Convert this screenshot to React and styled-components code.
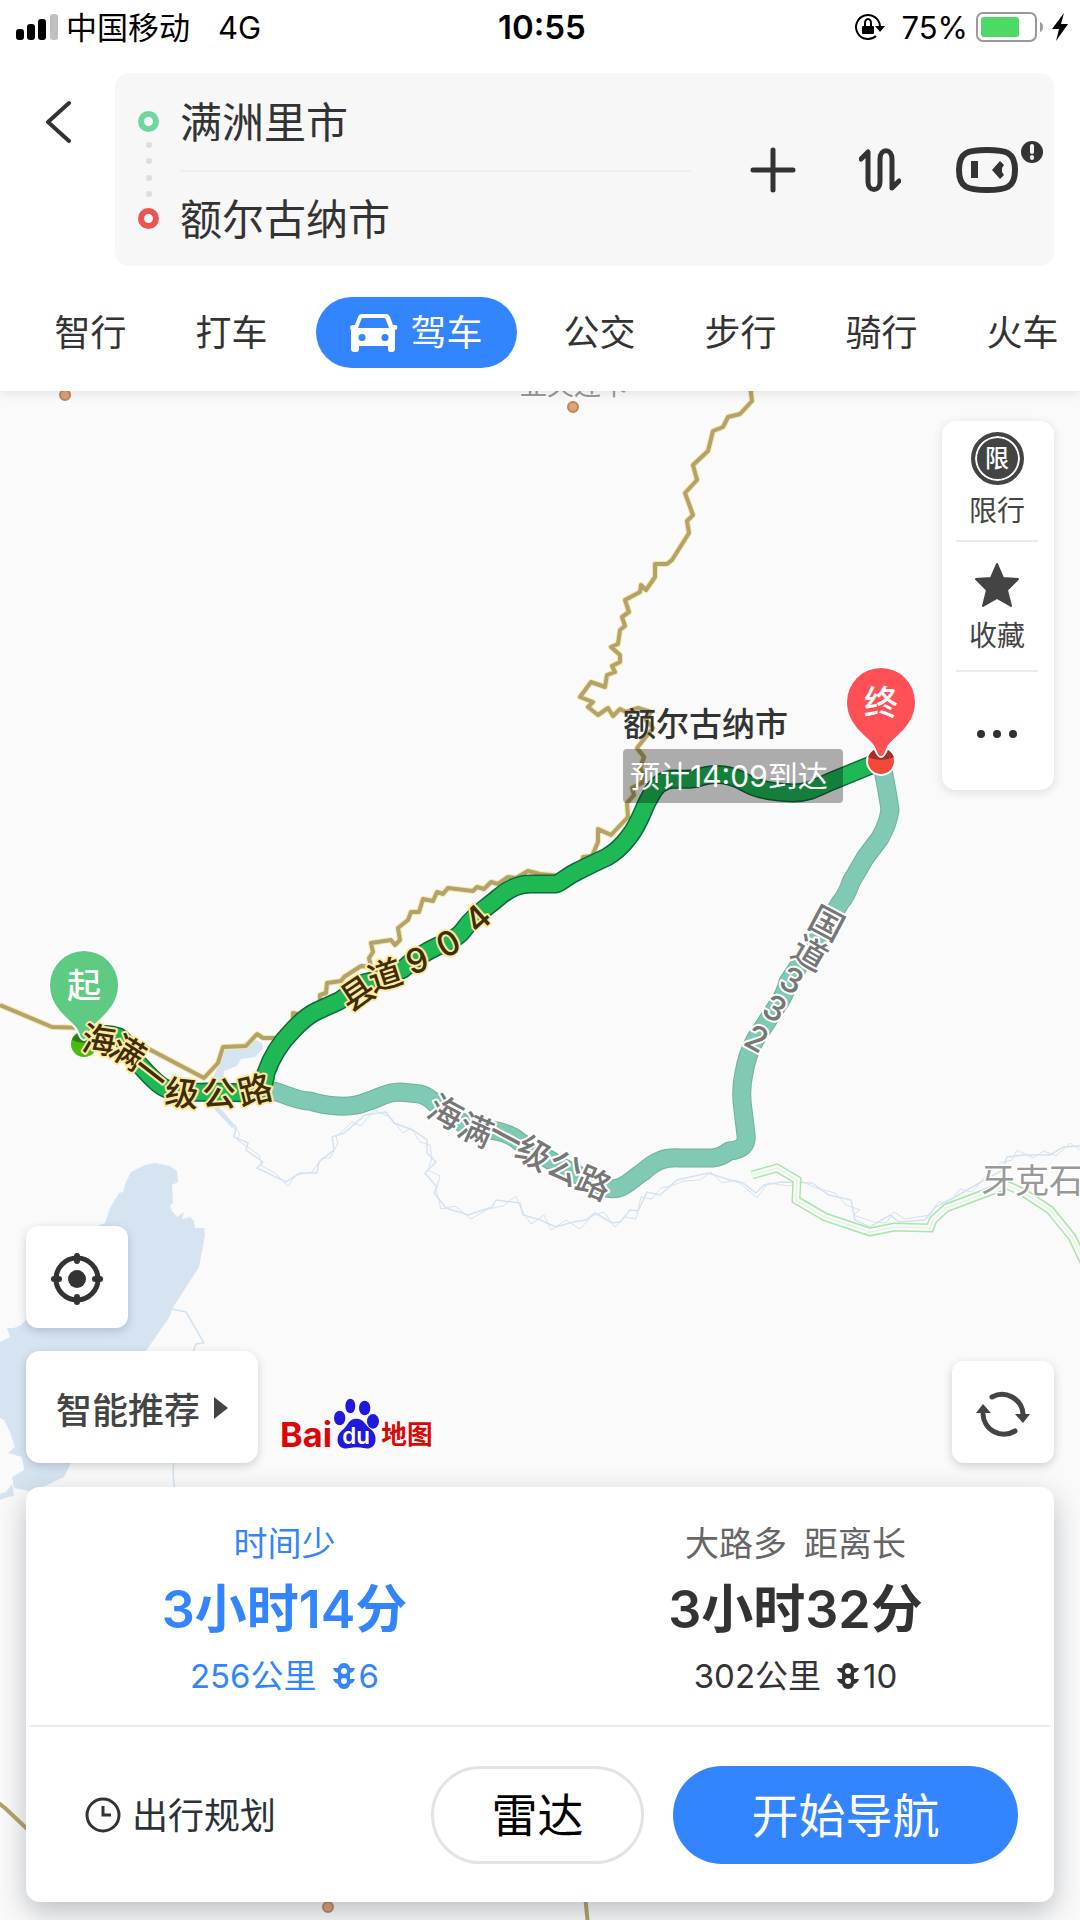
import React, { useState } from "react";
import styled, { createGlobalStyle } from "styled-components";

const tabs = ["智行", "打车", "驾车", "公交", "步行", "骑行", "火车"];

const routes = [
    { tag: "时间少", time: "3小时14分", distance: "256公里", lights: 6 },
    { tag: "大路多\u2002距离长", time: "3小时32分", distance: "302公里", lights: 10 },
];

const BORDER =
    "M750,385 L752,401 740,414 728,417 723,427 713,431 708,451 693,465 697,480 685,493 693,515 687,521 689,533 672,560 667,564 655,564 655,577 646,590 641,585 640,592 625,600 629,612 622,617 625,626 620,630 618,644 611,647 620,655 620,662 612,666 615,672 607,675 605,687 591,682 580,697 593,702 588,707 598,715 608,708 613,716 620,709 626,712 638,708 651,712 646,720 653,728 645,738 637,748 644,757 640,768 644,775 642,783 632,788 634,795 627,803 628,817 611,835 598,829 598,842 592,856 583,857 581,864 560,876 540,874 528,871 516,878 508,877 498,884 491,882 484,889 477,887 473,891 448,888 443,894 437,892 433,901 423,899 419,912 411,912 408,920 398,928 400,940 395,945 391,940 371,943 373,952 369,958 371,967 361,966 344,977 341,981 327,983 326,993 320,995 320,1004 311,1007 303,1015 293,1013 293,1022 288,1027 277,1038 263,1038 257,1034 246,1046 223,1047 218,1063 204,1078 145,1047 114,1030 86,1028 52,1027 0,1005";

const MAIN_ROUTE =
    "M84,1043 Q100,1030 119,1037 C128,1042 129,1053 138,1063 S158,1086 167,1089 Q180,1093 207,1092 L256,1093 Q264,1090 266,1073 C272,1055 281,1042 293,1030 Q306,1016 317,1011 L339,1001 C350,995 355,984 368,982 C388,979 390,975 403,969 C414,959 425,952 438,946 Q458,939 465,928 C475,914 485,909 499,897 Q515,883 533,884 H556 C562,882 567,876 578,871 Q592,864 607,857 Q619,850 628,838 C640,824 643,808 650,797 Q658,779 675,779 Q690,780 697,778 Q712,773 724,775 C735,776 742,781 750,785 S770,792 793,793 C810,793 820,786 832,781 L881,761";

const OTHER_ROUTE =
    "M258,1089 L277,1092 C290,1096 298,1101 310,1101 C325,1106 350,1109 366,1102 C380,1098 385,1092 400,1092 L420,1094 Q428,1096 436,1104 L465,1125 C485,1131 504,1128 520,1142 L560,1166 586,1179 607,1188 C622,1192 630,1180 643,1172 C655,1161 664,1157 680,1158 H712 Q722,1157 729,1151 C742,1150 747,1145 746,1135 L743,1110 Q740,1090 744,1073 Q747,1055 755,1040 L777,1006 Q785,995 788,982 L804,958 827,924 840,903 Q847,895 851,882 L865,858 880,838 Q888,824 890,810 Q888,795 882,765";

const RIVERS = [
    "M215,1107 L236,1127 234,1137 248,1143 246,1150 263,1162 257,1168 286,1182 300,1173 317,1173 319,1162 334,1150 332,1137 344,1133 365,1115 386,1112 394,1123 413,1130 427,1140 427,1153 436,1162 425,1173 437,1187 434,1193 446,1208 468,1215 492,1207 496,1200 520,1203 523,1215 540,1220 556,1227 573,1222 586,1220 595,1213 612,1223 620,1222 630,1210 638,1211 647,1192 660,1195 677,1180 708,1173 730,1180 743,1183 756,1193 764,1185 782,1182 812,1183 829,1195 851,1200 855,1220 870,1227 890,1215 899,1222 925,1220 935,1207 955,1197 981,1182 1003,1170 1007,1157 1024,1155 1050,1155 1063,1147 1080,1146",
    "M222,1110 L240,1134 237,1140 252,1150 259,1155 262,1166 275,1173 288,1186 296,1175 312,1172 322,1158 330,1158 338,1143 336,1137 352,1122 361,1126 374,1110 390,1117 403,1133 411,1128 420,1142 430,1145 432,1158 428,1170 440,1176 436,1190 441,1209 455,1206 471,1219 488,1209 503,1206 516,1196 522,1211 531,1224 544,1215 551,1230 566,1220 580,1229 592,1216 604,1212 615,1227 625,1217 636,1219 641,1197 652,1199 661,1188 671,1186 684,1181 700,1180 711,1172 722,1183 736,1180 748,1190 757,1198 768,1183 790,1186 801,1181 816,1188 835,1193 846,1205 860,1210 853,1215 874,1222 886,1223 894,1212 905,1219 918,1217 930,1215 938,1202 949,1203 960,1189 972,1192 985,1177 1000,1163 1012,1160 1017,1150 1033,1158 1044,1151 1056,1156 1070,1143 1080,1150",
    "M172,1309 L186,1312 204,1343 196,1344 193,1352 M174,1460 Q172,1475 175,1490",
];

const LAKE =
    "M105,1223 L110,1208 119,1193 123,1192 126,1182 131,1172 145,1165 155,1163 170,1166 177,1171 178,1182 172,1185 173,1203 170,1205 172,1211 177,1217 184,1212 182,1219 190,1217 194,1221 195,1228 204,1228 205,1235 199,1267 172,1309 170,1316 146,1351 100,1420 71,1463 64,1477 45,1486 29,1491 14,1488 12,1477 24,1470 22,1457 8,1453 15,1447 10,1432 4,1420 0,1418 V1342 L10,1337 7,1328 14,1328 21,1325 26,1320 100,1225 Z";

const POND =
    "M224,1050 L245,1042 254,1039 262,1043 263,1048 255,1057 241,1059 237,1066 224,1071 222,1090 217,1105 235,1126 232,1128 215,1110 207,1092 214,1075 220,1062 Z";

const HIGHWAY =
    "M752,1175 L777,1168 797,1180 796,1200 825,1217 870,1232 894,1227 930,1228 933,1220 946,1208 1007,1185 1024,1193 1050,1210 1072,1237 1084,1262";

// [char, x, y, rotation]
const mainLabels = [
    ["海", 99, 1040, 8],
    ["满", 128, 1052, 32],
    ["一", 151, 1073, 38],
    ["级", 182, 1093, 6],
    ["公", 219, 1093, 0],
    ["路", 255, 1090, -14],
    ["县", 357, 993, -34],
    ["道", 385, 975, -18],
    ["9", 417, 960, -20],
    ["0", 448, 943, -28],
    ["4", 477, 918, -42],
];

const otherLabels = [
    ["海", 446, 1112, 28],
    ["满", 476, 1130, 24],
    ["一", 506, 1137, 28],
    ["级", 534, 1153, 30],
    ["公", 565, 1168, 28],
    ["路", 594, 1183, 24],
    ["国", 827, 923, 28],
    ["道", 810, 953, 30],
    ["3", 792, 980, 28],
    ["3", 775, 1008, 28],
    ["2", 757, 1038, 28],
];

const PIN = "M0,54 C-3,54 -4,49 -6,45 C-11,35 -34,25 -34,0 A34,34 0 1 1 34,0 C34,25 11,35 6,45 C4,49 3,54 0,54 Z";

const MapPin = ({ x, y, color, text }) => (
    <g transform={`translate(${x} ${y})`}>
        <path d={PIN} fill={color} stroke="#fff" strokeWidth="4" paintOrder="stroke" />
        <PinText dy="0.37em">{text}</PinText>
    </g>
);

const RoadLabels = ({ items, fill, halo }) =>
    items.map(([char, x, y, angle], i) => (
        <RoadText key={i} $fill={fill} $halo={halo} dy="0.37em" transform={`translate(${x} ${y}) rotate(${angle})`}>
            {char}
        </RoadText>
    ));

const RouteMap = () => (
    <MapCanvas viewBox="0 391 1080 1529" preserveAspectRatio="xMidYMid slice" aria-label="路线地图">
        <path d={LAKE} fill="#d5e4f0" />
        <path d={POND} fill="#d5e4f0" />
        <g fill="none" stroke="#d3e2f0">
            <path d={RIVERS[0]} strokeWidth="1.5" />
            <path d={RIVERS[1]} strokeWidth="1" />
            <path d={RIVERS[2]} strokeWidth="1.5" />
        </g>
        <path d="M0,1494 L6,1492 12,1484 14,1496 8,1497 0,1500 Z" fill="#d5e4f0" />
        <path d={HIGHWAY} fill="none" stroke="#a3e8a6" strokeWidth="9" />
        <path d={HIGHWAY} fill="none" stroke="#fafafa" strokeWidth="6" />
        <path d={HIGHWAY} fill="none" stroke="#d9f5da" strokeWidth="1" />
        <g fill="none" strokeLinejoin="round">
            <path d={BORDER} stroke="#f4e7ae" strokeWidth="6" />
            <path d={BORDER} stroke="#b3a369" strokeWidth="4" />
            <path d="M-4,1801 L5,1808 60,1860 M585,1895 L588,1925" stroke="#b3a369" strokeWidth="4" />
        </g>
        <g fill="#dda17c" stroke="#c28458" strokeWidth="2">
            <circle cx="65" cy="395" r="5" />
            <circle cx="573" cy="407" r="5" />
            <circle cx="328" cy="1907" r="5" />
        </g>
        <PlaceText x="520" y="395" $size={27}>亚夫连卡</PlaceText>
        <PlaceText x="981" y="1193" $size={34}>牙克石</PlaceText>
        <g fill="none" strokeLinejoin="round">
            <path d={OTHER_ROUTE} stroke="#6fb09c" strokeWidth="19" />
            <path d={OTHER_ROUTE} stroke="#80c9b5" strokeWidth="17" />
            <path d={MAIN_ROUTE} stroke="#0d6b38" strokeWidth="19" />
            <path d={MAIN_ROUTE} stroke="#1eb954" strokeWidth="16" />
        </g>
        <circle cx="84" cy="1044" r="13" fill="#49bb0c" />
        <path d="M72,1040 A13,13 0 0 1 96,1040 Q84,1046 72,1040" fill="#2d7d17" />
        <circle cx="881" cy="761" r="14" fill="#f24a3a" stroke="#fff" strokeWidth="2" />
        <path d="M868,757 A14,14 0 0 1 894,757 Q881,763 868,757" fill="#a52c27" />
        <MapPin x={84} y={985} color="#5fca82" text="起" />
        <RoadLabels items={mainLabels} fill="#412d05" halo="#fdeaa2" />
        <RoadLabels items={otherLabels} fill="#777" halo="#fff" />
        <CityText x="623" y="736">额尔古纳市</CityText>
        <rect x="623" y="749" width="220" height="54" rx="4" fill="#000" fillOpacity="0.31" />
        <ArrivalText x="630" y="787">预计14:09到达</ArrivalText>
        <MapPin x={881} y={702} color="#ff5056" text="终" />
    </MapCanvas>
);

const TrafficLight = () => (
    <svg width="22" height="26" viewBox="0 0 22 26" fill="currentColor" aria-hidden="true">
        <path
            fillRule="evenodd"
            d="M11,0 C15,0 17,3 17,6 V20 C17,23 15,26 11,26 C7,26 5,23 5,20 V6 C5,3 7,0 11,0 Z M11,5 A3,3 0 1 0 11,11 A3,3 0 1 0 11,5 Z M11,15 A3,3 0 1 0 11,21 A3,3 0 1 0 11,15 Z"
        />
        <path d="M0,5 H5 V10 Q1,9 0,5 Z M0,16 H5 V21 Q1,20 0,16 Z" />
        <path d="M22,5 H17 V10 Q21,9 22,5 Z M22,16 H17 V21 Q21,20 22,16 Z" />
    </svg>
);

const BaiduLogo = () => (
    <Logo viewBox="26 26 468 156" role="img" aria-label="Baidu 地图">
        <text x="29" y="172" fill="#dc0606" fontSize="103" fontWeight="700">Bai</text>
        <g fill="#2019dc">
            <ellipse cx="208" cy="86" rx="17" ry="22" />
            <ellipse cx="240" cy="50" rx="15" ry="22" />
            <ellipse cx="283" cy="56" rx="17" ry="22" />
            <ellipse cx="308" cy="96" rx="18" ry="22" />
            <path d="M258,88 C280,88 284,106 298,117 C312,128 318,140 315,157 C311,174 297,180 280,176 Q258,172 238,176 C218,181 205,173 202,157 C200,140 207,130 219,120 C232,108 236,88 258,88 Z" />
        </g>
        <text x="216" y="164" fill="#fff" fontSize="67" fontWeight="600">du</text>
        <text x="333" y="165" fill="#dc0606" fontSize="77" fontWeight="700">地图</text>
    </Logo>
);

export default function App() {
    const [mode, setMode] = useState("驾车");
    const [selected, setSelected] = useState(0);

    return (
        <Page>
            <GlobalStyle />
            <Header>
                <StatusBar>
                    <StatusGroup>
                        <svg width="42" height="26" viewBox="0 0 42 26" aria-hidden="true">
                            <rect x="0" y="15" width="8" height="11" rx="3" />
                            <rect x="11" y="10" width="8" height="16" rx="3" />
                            <rect x="22" y="5" width="8" height="21" rx="3" />
                            <rect x="34" y="0" width="8" height="26" rx="3" fill="#bfbfbf" />
                        </svg>
                        <Carrier>中国移动</Carrier>
                        <span>4G</span>
                    </StatusGroup>
                    <Clock>10:55</Clock>
                    <StatusGroup $end>
                        <svg width="31" height="28" viewBox="0 0 31 28" fill="none" stroke="#000" strokeWidth="2" aria-hidden="true">
                            <path d="M22,23 A12,12 0 1 1 26,13" />
                            <path d="M21,13 H31 L26,19 Z" fill="#000" stroke="none" />
                            <path d="M11,14 V10 A3,4 0 0 1 17,10 V14" />
                            <rect x="8" y="13" width="12" height="8" rx="1" fill="#000" stroke="none" />
                        </svg>
                        <Percent>75%</Percent>
                        <svg width="68" height="30" viewBox="0 0 68 30" aria-hidden="true">
                            <rect x="1" y="1" width="59" height="28" rx="6" fill="#fff" stroke="#999" strokeWidth="2" />
                            <rect x="5" y="5" width="38" height="20" rx="3" fill="#4cd964" />
                            <path d="M64,10 Q67,11 67,15 T64,20 Z" fill="#999" />
                        </svg>
                        <svg width="16" height="28" viewBox="0 0 16 28" aria-hidden="true">
                            <path d="M12,0 L0,16 H7 L4,28 L16,11 H9 Z" />
                        </svg>
                    </StatusGroup>
                </StatusBar>

                <SearchRow>
                    <BackButton aria-label="返回">
                        <svg width="26" height="44" viewBox="0 0 26 44" fill="none" stroke="#333" strokeWidth="4" strokeLinecap="round" strokeLinejoin="round">
                            <path d="M24,3 L3,22 L24,41" />
                        </svg>
                    </BackButton>
                    <SearchBox>
                        <Stops>
                            <Ring $color="#6ed7a0" />
                            <Dots><i /><i /><i /><i /></Dots>
                            <Ring $color="#ee5253" />
                        </Stops>
                        <Places>
                            <PlaceInput aria-label="起点" defaultValue="满洲里市" />
                            <PlaceInput aria-label="终点" defaultValue="额尔古纳市" />
                        </Places>
                        <IconButton aria-label="添加途经点">
                            <svg width="46" height="46" viewBox="0 0 46 46" stroke="#333" strokeWidth="5" strokeLinecap="round">
                                <path d="M23,3 V43 M3,23 H43" />
                            </svg>
                        </IconButton>
                        <IconButton aria-label="交换起终点">
                            <svg width="42" height="44" viewBox="0 0 42 44" fill="none" stroke="#333" strokeWidth="5" strokeLinecap="round" strokeLinejoin="round">
                                <path d="M2,11 L9,4 V34 C9,44 21,44 21,34 V11 C21,0 33,0 33,11 V40 L40,33" />
                            </svg>
                        </IconButton>
                        <IconButton aria-label="智能助手">
                            <svg width="62" height="46" viewBox="0 0 62 46" overflow="visible">
                                <path d="M31,3 C50,3 59,5 59,23 C59,41 50,43 31,43 C12,43 3,41 3,23 C3,5 12,3 31,3 Z" fill="none" stroke="#333" strokeWidth="6" />
                                <path d="M15,14 H22 V31 H15 Z M36,23 L44,14 L48,18 L46,21 V25 L48,28 L44,32 Z" fill="#333" />
                                <circle cx="76" cy="5" r="11" fill="#333" />
                                <path d="M76,-1 V5 M76,10 V11" stroke="#f7f7f7" strokeWidth="4" strokeLinecap="round" />
                            </svg>
                        </IconButton>
                    </SearchBox>
                </SearchRow>

                <Tabs>
                    {tabs.map((tab) => (
                        <Tab key={tab} $active={tab === mode} onClick={() => setMode(tab)}>
                            {tab === "驾车" && (
                                <svg width="48" height="38" viewBox="0 0 48 38" fill="currentColor" aria-hidden="true">
                                    <path
                                        fillRule="evenodd"
                                        d="M12,0 H36 Q39,0 40,3 L43,11 H46 Q48,12 47,15 L45,16 V35 Q45,38 42,38 H40 Q38,38 38,35 V32 H9 V35 Q9,38 6,38 H4 Q1,38 1,35 V16 L0,14 Q0,11 3,11 H5 L8,3 Q9,0 12,0 Z M13,4 Q11,4 11,6 L8,14 H39 L36,6 Q36,4 34,4 Z M12,20 A3,3 0 1 0 12,27 A3,3 0 1 0 12,20 Z M35,20 A3,3 0 1 0 35,27 A3,3 0 1 0 35,20 Z"
                                    />
                                </svg>
                            )}
                            <TabLabel>{tab}</TabLabel>
                        </Tab>
                    ))}
                </Tabs>
            </Header>

            <MapArea>
                <RouteMap />
                <Toolbar>
                    <Tool>
                        <LimitBadge>限</LimitBadge>
                        限行
                    </Tool>
                    <Tool>
                        <svg width="46" height="46" viewBox="0 0 46 46" aria-hidden="true">
                            <path d="M23,2 L29,16 L44,17 L33,28 L37,44 L23,36 L9,44 L13,28 L2,17 L17,16 Z" fill="#444" stroke="#444" strokeWidth="2" strokeLinejoin="round" />
                        </svg>
                        收藏
                    </Tool>
                    <Tool aria-label="更多">
                        <svg width="42" height="10" viewBox="0 0 42 10" fill="#2b3138">
                            <circle cx="5" cy="5" r="4" />
                            <circle cx="21" cy="5" r="4" />
                            <circle cx="37" cy="5" r="4" />
                        </svg>
                    </Tool>
                </Toolbar>

                <MapFooter>
                    <LeftControls>
                        <SquareButton aria-label="定位">
                            <svg width="52" height="52" viewBox="0 0 52 52" fill="none" stroke="#333" strokeLinecap="round">
                                <circle cx="26" cy="26" r="21" strokeWidth="5" />
                                <circle cx="26" cy="26" r="9" fill="#333" stroke="none" />
                                <path d="M26,3 V8 M26,44 V49 M3,26 H8 M44,26 H49" strokeWidth="6" />
                            </svg>
                        </SquareButton>
                        <RecommendButton>
                            智能推荐
                            <svg width="14" height="22" viewBox="0 0 14 22" fill="#444" aria-hidden="true">
                                <path d="M0,0 L14,11 L0,22 Z" />
                            </svg>
                        </RecommendButton>
                    </LeftControls>
                    <BaiduLogo />
                    <SquareButton aria-label="刷新">
                        <svg width="54" height="46" viewBox="0 0 54 46" fill="none" stroke="#444" strokeWidth="5" strokeLinecap="round">
                            <path d="M16,6 A21,21 0 0 1 47,23" />
                            <path d="M39,40 A21,21 0 0 1 7,23" />
                            <path d="M39,23 H54 L47,32 Z M0,22 H15 L7,13 Z" fill="#444" stroke="none" />
                        </svg>
                    </SquareButton>
                </MapFooter>

                <Card>
                    <RouteList>
                        {routes.map((route, i) => (
                            <RouteOption key={route.time} $active={i === selected} onClick={() => setSelected(i)}>
                                <RouteTag $active={i === selected}>{route.tag}</RouteTag>
                                <RouteTime>{route.time}</RouteTime>
                                <RouteInfo>
                                    {route.distance}
                                    <Lights>
                                        <TrafficLight />
                                        {route.lights}
                                    </Lights>
                                </RouteInfo>
                            </RouteOption>
                        ))}
                    </RouteList>
                    <Actions>
                        <PlanButton>
                            <svg width="36" height="36" viewBox="0 0 36 36" fill="none" stroke="#333" strokeWidth="3" aria-hidden="true">
                                <circle cx="18" cy="18" r="16" />
                                <path d="M18,9 V18 H26" />
                            </svg>
                            <TabLabel>出行规划</TabLabel>
                        </PlanButton>
                        <RadarButton>雷达</RadarButton>
                        <StartButton>开始导航</StartButton>
                    </Actions>
                </Card>
            </MapArea>
        </Page>
    );
}

const GlobalStyle = createGlobalStyle`
    * {
        box-sizing: border-box;
    }

    body {
        margin: 0;
        font-family: Inter, "Noto Sans CJK SC", sans-serif;
        color: #333;
    }

    button,
    input {
        font: inherit;
        color: inherit;
        border: none;
        background: none;
        padding: 0;
        margin: 0;
    }

    button {
        cursor: pointer;
    }

    svg {
        flex-shrink: 0;
    }
`;

const Page = styled.div`
    min-height: 100vh;
    display: flex;
    flex-direction: column;
    background-color: #fafafa;
`;

const Header = styled.header`
    position: relative;
    z-index: 1;
    background-color: #fff;
    box-shadow: 0 2px 10px rgba(30, 40, 60, 0.12);
`;

const StatusBar = styled.div`
    height: 54px;
    padding: 0 12px 0 16px;
    display: grid;
    grid-template-columns: 1fr auto 1fr;
    align-items: center;
    font-size: 31px;
    color: #000;
`;

const StatusGroup = styled.div`
    display: flex;
    align-items: center;
    justify-content: ${({ $end }) => ($end ? "flex-end" : "flex-start")};
    gap: 8px;
`;

const Carrier = styled.span`
    margin-right: 20px;
    padding-bottom: 4px;
`;

const Clock = styled.div`
    font-size: 33px;
    font-weight: 600;
`;

const Percent = styled.span`
    margin-left: 8px;
`;

const SearchRow = styled.div`
    display: flex;
    align-items: flex-start;
    padding: 19px 26px 0 0;
`;

const BackButton = styled.button`
    width: 115px;
    height: 98px;
    display: flex;
    align-items: center;
    justify-content: center;
`;

const SearchBox = styled.div`
    flex: 1;
    min-width: 0;
    display: flex;
    align-items: center;
    height: 193px;
    padding: 0 14px 0 23px;
    background-color: #f7f7f7;
    border-radius: 14px;
`;

const Stops = styled.div`
    display: flex;
    flex-direction: column;
    align-items: center;
    width: 21px;
    margin-right: 21px;
`;

const Ring = styled.span`
    width: 21px;
    height: 21px;
    border: 6px solid ${({ $color }) => $color};
    border-radius: 50%;
    background-color: #fff;
`;

const Dots = styled.div`
    height: 76px;
    padding: 5px 0;
    display: flex;
    flex-direction: column;
    justify-content: space-around;

    i {
        width: 6px;
        height: 6px;
        border-radius: 50%;
        background-color: #ddd;
    }
`;

const Places = styled.div`
    flex: 1;
    min-width: 0;
    margin-right: 28px;
`;

const PlaceInput = styled.input`
    display: block;
    width: 100%;
    height: 96px;
    padding-bottom: 4px;
    font-size: 42px;
    outline: none;

    & + & {
        border-top: 2px solid #efefef;
    }
`;

const IconButton = styled.button`
    width: 107px;
    height: 96px;
    display: flex;
    align-items: center;
    justify-content: center;
`;

const Tabs = styled.nav`
    display: flex;
    align-items: center;
    height: 125px;
    padding: 8px 0 0 20px;
    overflow: hidden;
`;

const Tab = styled.button`
    flex-shrink: 0;
    display: flex;
    align-items: center;
    justify-content: center;
    gap: 12px;
    width: ${({ $active }) => ($active ? "201px" : "141px")};
    height: 71px;
    margin: ${({ $active }) => ($active ? "0 12px 0 14px" : "0")};
    border-radius: 36px;
    font-size: 36px;
    color: ${({ $active }) => ($active ? "#fff" : "#333")};
    background-color: ${({ $active }) => ($active ? "#3385ff" : "transparent")};
`;

const TabLabel = styled.span`
    padding-bottom: 5px;
`;

const MapArea = styled.main`
    position: relative;
    flex: 1;
    display: flex;
    flex-direction: column;
    padding: 30px 26px 18px;
    overflow: hidden;
`;

const MapCanvas = styled.svg`
    position: absolute;
    inset: 0;
    width: 100%;
    height: 100%;
`;

const PinText = styled.text`
    fill: #fff;
    font-size: 34px;
    font-weight: 500;
    text-anchor: middle;
`;

const RoadText = styled.text`
    fill: ${({ $fill }) => $fill};
    stroke: ${({ $halo }) => $halo};
    stroke-width: 4px;
    stroke-linejoin: round;
    paint-order: stroke;
    font-size: 34px;
    font-weight: 500;
    text-anchor: middle;
`;

const PlaceText = styled.text`
    fill: #999;
    stroke: #fff;
    stroke-width: 3px;
    paint-order: stroke;
    font-size: ${({ $size }) => $size}px;
`;

const CityText = styled.text`
    fill: #333;
    font-size: 33px;
    font-weight: 500;
`;

const ArrivalText = styled.text`
    fill: #fff;
    font-size: 30px;
`;

const Toolbar = styled.div`
    position: relative;
    align-self: flex-end;
    width: 112px;
    display: flex;
    flex-direction: column;
    padding: 0 16px 0 14px;
    background-color: #fff;
    border-radius: 14px;
    box-shadow: 0 2px 10px rgba(30, 40, 60, 0.14);
`;

const Tool = styled.button`
    display: flex;
    flex-direction: column;
    align-items: center;
    justify-content: center;
    gap: 8px;
    height: 130px;
    padding-top: 6px;
    font-size: 28px;
    line-height: 40px;
    white-space: nowrap;
    color: #444;

    &:first-child {
        height: 119px;
        padding-top: 2px;
        gap: 6px;
    }

    & + & {
        border-top: 2px solid #ebebeb;
    }

    &:last-child {
        height: 120px;
    }
`;

const LimitBadge = styled.span`
    width: 53px;
    height: 53px;
    display: flex;
    align-items: center;
    justify-content: center;
    border: 4px solid #444;
    border-radius: 50%;
    box-shadow: inset 0 0 0 2px #fff;
    background-color: #444;
    color: #fff;
    font-size: 24px;
    line-height: 24px;
    font-weight: 500;
`;

const MapFooter = styled.div`
    position: relative;
    display: flex;
    align-items: flex-end;
    margin-top: auto;
    margin-bottom: 24px;
`;

const LeftControls = styled.div`
    display: flex;
    flex-direction: column;
    gap: 23px;
`;

const SquareButton = styled.button`
    width: 102px;
    height: 102px;
    padding-top: 4px;
    display: flex;
    align-items: center;
    justify-content: center;
    background-color: #fff;
    border-radius: 12px;
    box-shadow: 0 3px 10px rgba(30, 40, 60, 0.2);
`;

const RecommendButton = styled.button`
    width: 232px;
    height: 112px;
    padding-top: 2px;
    display: flex;
    align-items: center;
    justify-content: center;
    gap: 14px;
    background-color: #fff;
    border-radius: 14px;
    box-shadow: 0 3px 10px rgba(30, 40, 60, 0.2);
    font-size: 36px;
    font-weight: 500;
    color: #444;
`;

const Logo = styled.svg`
    width: 156px;
    height: 52px;
    margin: 0 auto 13px 21px;
    overflow: visible;
`;

const Card = styled.section`
    position: relative;
    background-color: #fff;
    border-radius: 14px;
    box-shadow: 0 10px 28px rgba(30, 40, 60, 0.28);
`;

const RouteList = styled.div`
    display: grid;
    grid-template-columns: 1fr 1fr;
    margin: 0 3px;
    padding: 24px 0 16px;
    border-bottom: 2px solid #ebebeb;
`;

const RouteOption = styled.button`
    display: flex;
    flex-direction: column;
    align-items: center;
    line-height: 66px;
    color: ${({ $active }) => ($active ? "#3385ff" : "#333")};
`;

const RouteTag = styled.span`
    font-size: 34px;
    color: ${({ $active }) => ($active ? "#3385ff" : "#666")};
`;

const RouteTime = styled.strong`
    font-size: 52px;
    font-weight: 600;
`;

const RouteInfo = styled.span`
    display: flex;
    align-items: center;
    gap: 16px;
    font-size: 33px;
`;

const Lights = styled.span`
    display: flex;
    align-items: center;
    gap: 4px;
`;

const Actions = styled.div`
    display: flex;
    align-items: center;
    gap: 29px;
    padding: 39px 36px 38px 59px;
`;

const PlanButton = styled.button`
    display: flex;
    align-items: center;
    gap: 11px;
    margin-right: auto;
    font-size: 36px;
    color: #2b3138;
`;

const RadarButton = styled.button`
    width: 213px;
    height: 98px;
    padding-bottom: 6px;
    border: 3px solid #e3e3e3;
    border-radius: 49px;
    font-size: 46px;
    color: #000;
`;

const StartButton = styled.button`
    width: 345px;
    height: 98px;
    padding-bottom: 6px;
    border-radius: 49px;
    font-size: 47px;
    color: #fff;
    background-color: #3385ff;
`;
